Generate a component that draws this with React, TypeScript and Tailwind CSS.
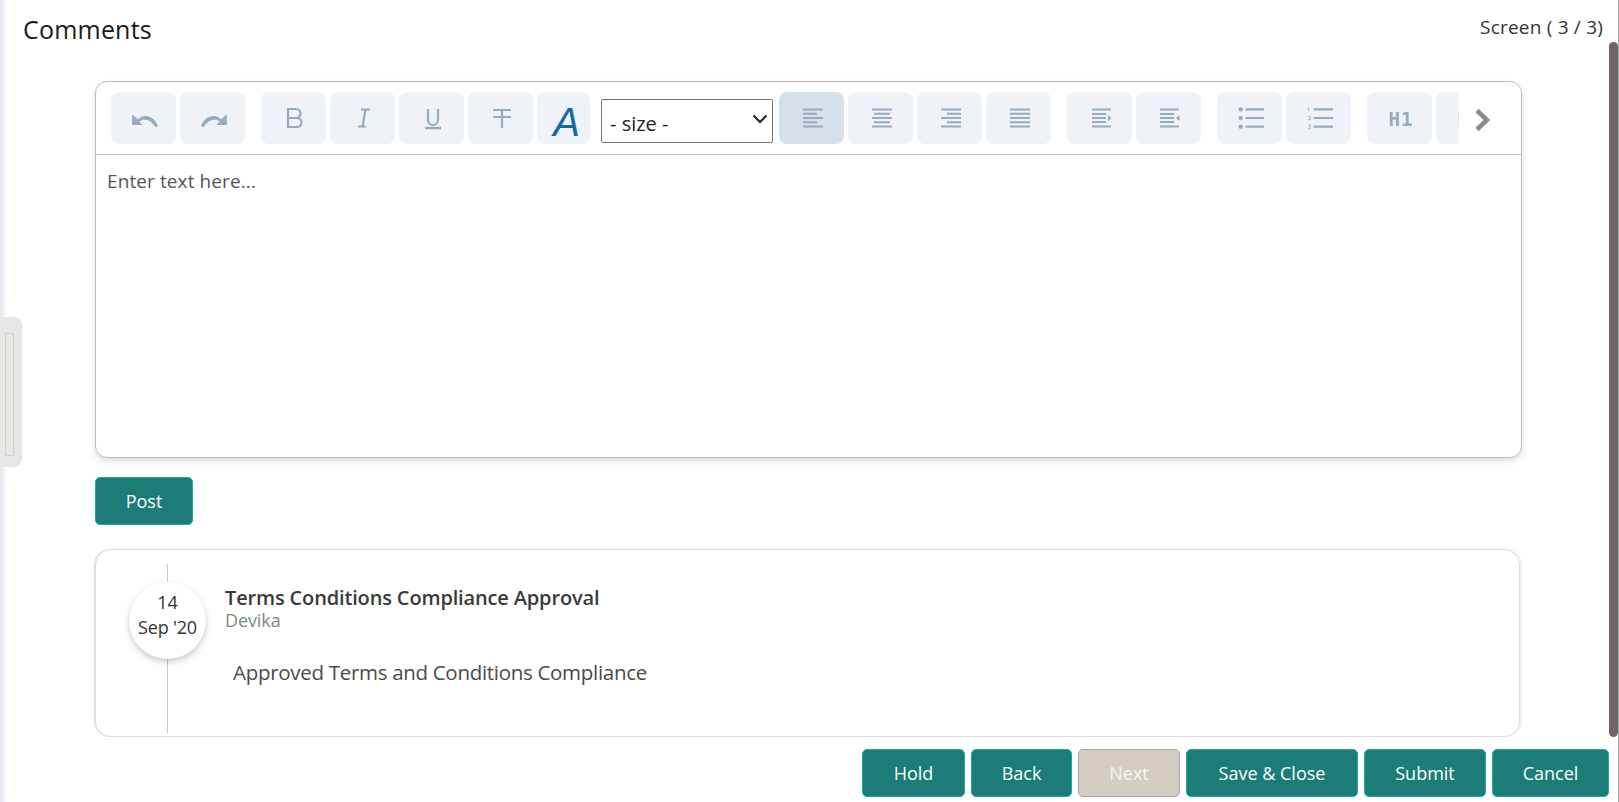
import type { ReactNode } from "react";

const ink = "#94abc2";

function Glyph({ children, size = 24 }: { children: ReactNode; size?: number }) {
  return (
    <svg className="ml-[3px]" width={size} height={size} viewBox="0 0 24 24" fill="none" stroke={ink} strokeWidth="2">
      {children}
    </svg>
  );
}

function Lines({ rows }: { rows: [number, number][] }) {
  return (
    <Glyph>
      {rows.map(([x1, x2], i) => (
        <line key={i} x1={x1} x2={x2} y1={3.5 + i * 4.25} y2={3.5 + i * 4.25} />
      ))}
    </Glyph>
  );
}

const undo = (
  <Glyph size={28}>
    <path d="M1 9v9h9l-3-3c4-3 10-2 14 5l2-1c-3-9-12-11-17-6z" fill={ink} stroke="none" />
  </Glyph>
);
const redo = (
  <Glyph size={28}>
    <path d="M23 9v9h-9l3-3c-4-3-10-2-14 5l-2-1c3-9 12-11 17-6z" fill={ink} stroke="none" />
  </Glyph>
);
const bold = (
  <Glyph>
    <path d="M5 3h8a4.500 4.500 0 0 1 0 9H5zM5 12h9a4.500 4.500 0 0 1 0 9H5z" strokeWidth="2.200" />
  </Glyph>
);
const italic = (
  <Glyph>
    <path d="M9 3.500h9M6 20.500h8M13.500 3.500l-3 17" strokeWidth="2.200" />
  </Glyph>
);
const underline = (
  <Glyph>
    <path d="M7 3v11a5 5 0 0 0 10 0V3" strokeWidth="2.200" />
    <path d="M4 22h16" strokeWidth="2.400" />
  </Glyph>
);
const strike = (
  <Glyph>
    <path d="M3 4h18M12 4v18M3 11h18" strokeWidth="2.200" />
  </Glyph>
);
const alignLeft = <Lines rows={[[2, 22], [2, 16], [2, 22], [2, 16], [2, 22]]} />;
const alignCenter = <Lines rows={[[2, 22], [4, 20], [2, 22], [4, 20], [2, 22]]} />;
const alignRight = <Lines rows={[[2, 22], [8, 22], [2, 22], [8, 22], [2, 22]]} />;
const justify = <Lines rows={[[2, 22], [2, 22], [2, 22], [2, 22], [2, 22]]} />;
const indent = (
  <Glyph>
    <path d="M3 3.500h19M3 8h14M3 12h14M3 16h14M3 20.500h19" />
    <path d="M19 9l3.500 3-3.500 3z" fill={ink} stroke="none" />
  </Glyph>
);
const outdent = (
  <Glyph>
    <path d="M2 3.500h19M2 8h14M2 12h14M2 16h14M2 20.500h19" />
    <path d="M21.500 9L18 12l3.500 3z" fill={ink} stroke="none" />
  </Glyph>
);
const bullets = (
  <Glyph size={26}>
    <path d="M7 4h17M7 12h17M7 20h17" />
    <circle cx="2.500" cy="4" r="2" fill={ink} stroke="none" />
    <circle cx="2.500" cy="12" r="2" fill={ink} stroke="none" />
    <circle cx="2.500" cy="20" r="2" fill={ink} stroke="none" />
  </Glyph>
);
const numbers = (
  <Glyph size={26}>
    <path d="M6 4h18M6 12h18M6 20h18" />
    <path d="M1.500 2.500v3M1 10.500h2v3H1M1 18.500h2v3H1" strokeWidth="0.8" />
  </Glyph>
);

function ToolButton({ children, active }: { children?: ReactNode; active?: boolean }) {
  return (
    <span
      className={`flex h-[52px] w-[65px] shrink-0 items-center justify-center rounded-lg ${
        active ? "bg-[#d6e0e8]" : "bg-[#eff2f7]"
      }`}
    >
      {children}
    </span>
  );
}

function Heading({ label }: { label: string }) {
  return (
    <span className="pl-[3px] pt-[2px] font-['DejaVu_Sans_Mono',monospace] text-[19px] font-bold tracking-[1px] text-[#94abc2]">
      {label}
    </span>
  );
}

function Toolbar() {
  return (
    <div className="flex h-[73px] items-center border-b border-[#bcc2c8] pl-[15px]">
      <div className="flex w-[1348px] items-center overflow-hidden">
        <div className="flex shrink-0 gap-1">
          <ToolButton>{undo}</ToolButton>
          <ToolButton>{redo}</ToolButton>
        </div>
        <div className="ml-4 flex shrink-0 gap-1">
          <ToolButton>{bold}</ToolButton>
          <ToolButton>{italic}</ToolButton>
          <ToolButton>{underline}</ToolButton>
          <ToolButton>{strike}</ToolButton>
          <span className="flex h-[52px] w-[53px] items-center justify-center rounded-lg bg-[#eff2f7] pl-[6px] pt-[8px] font-['Liberation_Sans',sans-serif] text-[40px] italic text-[#0f6a9e]">
            A
          </span>
        </div>
        <div className="relative ml-[11px] mt-[6px] h-[44px] w-[172px] shrink-0">
          <select className="h-full w-full appearance-none rounded-[2px] border border-[#767676] bg-white pl-[8px] pt-[6px] text-[20px] text-[#222]">
            <option>- size -</option>
          </select>
          <svg className="absolute right-[5px] top-[15px]" width="16" height="10" viewBox="0 0 16 10" fill="none" stroke="#222" strokeWidth="2">
            <path d="M1.500 1.500L8 8l6.500-6.500" />
          </svg>
        </div>
        <div className="ml-[6px] flex shrink-0 gap-1">
          <ToolButton active>{alignLeft}</ToolButton>
          <ToolButton>{alignCenter}</ToolButton>
          <ToolButton>{alignRight}</ToolButton>
          <ToolButton>{justify}</ToolButton>
        </div>
        <div className="ml-4 flex shrink-0 gap-1">
          <ToolButton>{indent}</ToolButton>
          <ToolButton>{outdent}</ToolButton>
        </div>
        <div className="ml-4 flex shrink-0 gap-1">
          <ToolButton>{bullets}</ToolButton>
          <ToolButton>{numbers}</ToolButton>
        </div>
        <div className="ml-4 flex shrink-0 gap-1">
          <ToolButton>
            <Heading label="H1" />
          </ToolButton>
          <ToolButton>
            <Heading label="H2" />
          </ToolButton>
        </div>
      </div>
      <svg className="ml-[15px] mt-[3px]" width="18" height="24" viewBox="0 0 18 24" fill="none" stroke="#8a8a8a" strokeWidth="4.500">
        <path d="M3 2.500l10 9.500-10 9.500" />
      </svg>
    </div>
  );
}

function ActionButton({ label, width, disabled }: { label: string; width: string; disabled?: boolean }) {
  return (
    <button
      className={`h-[48px] rounded-[5px] border text-[18px] ${width} ${
        disabled
          ? "border-[#a9a59d] bg-[#d3cdc2] text-[#f7f5f0]"
          : "border-[#17ad9f] bg-[#1c7d78] text-white"
      }`}
    >
      {label}
    </button>
  );
}

export default function App() {
  return (
    <div className="relative flex h-[802px] w-full flex-col overflow-hidden bg-white font-['Open_Sans',sans-serif] text-[#333]">
      {/* left edge of the page + collapsed panel handle */}
      <div className="absolute bottom-0 left-0 top-0 w-[7px] bg-gradient-to-r from-[#dfe5ee] to-white" />
      <div className="absolute left-0 top-[317px] flex h-[150px] w-[22px] items-start rounded-r-lg bg-[#e6e6e4] pl-[5px] pt-[16px]">
        <div className="h-[123px] w-[9px] border border-[#cfcfcc]" />
      </div>

      {/* scrollbar */}
      <div className="absolute bottom-0 right-0 top-0 w-px bg-[#a8a8a8]" />
      <div className="absolute right-px top-[42px] h-[695px] w-[9px] rounded-full bg-[#6f6565]" />

      <div className="flex h-[737px] flex-col overflow-hidden pl-[95px] pr-[97px]">
        <header className="-ml-[72px] -mr-[81px] flex h-[81px] shrink-0 items-start justify-between">
          <h1 className="mt-[11px] text-[25px] leading-[36px] tracking-[0.2px] text-[#1a1a1a]">Comments</h1>
          <span className="mt-[14px] text-[19px] leading-[27px] tracking-[0.2px] text-[#333]">Screen ( 3 / 3)</span>
        </header>

        <section className="h-[377px] shrink-0 rounded-xl border border-[#bbbbbb] shadow-[0_3px_6px_rgba(0,0,0,0.14)]">
          <Toolbar />
          <p className="px-[11px] pt-[13px] text-[19px] leading-[27px] tracking-[0.1px] text-[#555]">Enter text here...</p>
        </section>

        <button className="mt-[19px] h-[48px] w-[98px] shrink-0 rounded-[5px] border border-[#17ad9f] bg-[#1c7d78] text-[18px] text-white">
          Post
        </button>

        <article className="relative mr-[2px] mt-[24px] flex h-[188px] shrink-0 rounded-[16px] border border-[#d9dee5] shadow-[-1px_0_1px_#c9d8e6,2px_0_1px_#eef0f2]">
          <div className="relative ml-[33px] flex h-[186px] w-[77px] shrink-0 justify-center">
            <div className="absolute bottom-[3px] left-[38px] top-[14px] w-px bg-[#c8c8c8]" />
            <div className="relative mt-[32px] flex h-[77px] w-[77px] flex-col items-center justify-center rounded-full bg-white pb-[12px] text-[18px] leading-[25px] text-[#333] shadow-[0_3px_6px_rgba(0,0,0,0.22)]">
              <span>14</span>
              <span className="tracking-[-0.2px]">Sep '20</span>
            </div>
          </div>
          <div className="ml-[19px] pt-[33px]">
            <h2 className="text-[20px] font-semibold leading-[30px] tracking-[-0.15px] text-[#3a3a3a]">
              Terms Conditions Compliance Approval
            </h2>
            <p className="-mt-[5px] text-[18px] leading-[24px] tracking-[-0.1px] text-[#7c8a7e]">Devika</p>
            <p className="ml-[8px] mt-[25px] text-[20.5px] leading-[30px] tracking-[-0.3px] text-[#4a4a4a]">
              Approved Terms and Conditions Compliance
            </p>
          </div>
        </article>
      </div>

      <footer className="flex h-[65px] shrink-0 justify-end gap-[6px] pr-[10px] pt-[12px]">
        <ActionButton label="Hold" width="w-[103px]" />
        <ActionButton label="Back" width="w-[101px]" />
        <ActionButton label="Next" width="w-[102px]" disabled />
        <ActionButton label="Save & Close" width="w-[172px]" />
        <ActionButton label="Submit" width="w-[122px]" />
        <ActionButton label="Cancel" width="w-[117px]" />
      </footer>
    </div>
  );
}
